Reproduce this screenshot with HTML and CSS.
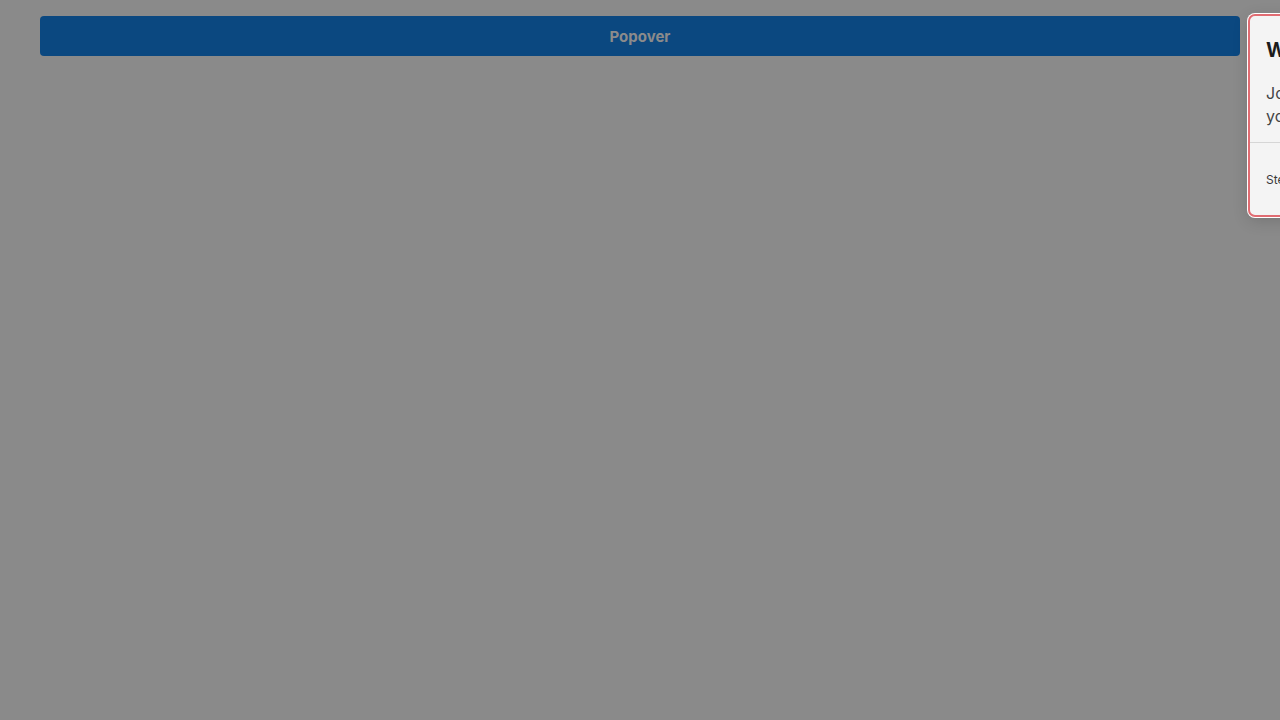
FILE: index.html
```html
<!DOCTYPE html>
<html lang="en">
<head>
<meta charset="utf-8">
<title>Popover</title>
<link rel="stylesheet" href="styles.css">
</head>
<body>
<div class="page">
  <button class="trigger">Popover</button>
</div>
<div class="popover">
  <div class="popover-body">
    <h2 class="popover-title">Welcome</h2>
    <p class="popover-text">Join our community today and<br>your first project is waiting.</p>
  </div>
  <div class="popover-footer">
    <span class="footer-text">Step 1 of 3</span>
  </div>
</div>
</body>
</html>
```

FILE: styles.css
```css
html, body {
  margin: 0;
  padding: 0;
  width: 1280px;
  height: 720px;
  overflow: hidden;
}
body {
  background: #8a8a8a;
  font-family: Inter, "Noto Sans", sans-serif;
  position: relative;
}
.page {
  padding: 16px 40px;
}
.trigger {
  display: block;
  width: 100%;
  height: 40px;
  border: none;
  border-radius: 4px;
  background: #0b4880;
  color: #8b8b8b;
  font-family: Inter, "Noto Sans", sans-serif;
  font-size: 15px;
  font-weight: 700;
  padding: 0;
}
.popover {
  position: absolute;
  left: 1248px;
  top: 14px;
  width: 320px;
  box-sizing: border-box;
  background: #f4f4f4;
  border: 2px solid #e06c72;
  border-radius: 7px;
  box-shadow: 0 0 0 1px #ffffff, 0 4px 16px rgba(0,0,0,0.15);
}
.popover-body {
  padding: 22px 16px 14px 16px;
  border-bottom: 1px solid #d6d6d6;
}
.popover-title {
  margin: 0 0 20px 0;
  font-size: 20px;
  line-height: 24px;
  font-weight: 700;
  color: #1c1c1c;
}
.popover-text {
  margin: 0;
  font-size: 16px;
  line-height: 23px;
  color: #444444;
  white-space: nowrap;
}
.popover-footer {
  padding: 25px 16px 27px 16px;
}
.footer-text {
  font-size: 12px;
  line-height: 16px;
  color: #3a3a3a;
}
```
